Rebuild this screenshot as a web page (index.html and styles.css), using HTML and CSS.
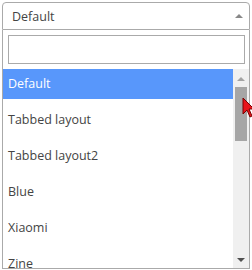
FILE: index.html
```html
<!DOCTYPE html>
<html>
    <head>
        <meta charset="UTF-8">
        <link rel="stylesheet" href="styles.css">
    </head>
    <body>
        <div class="select">
            <div class="selection">
                <span class="rendered">Default</span>
                <span class="arrow"></span>
            </div>
            <div class="dropdown">
                <div class="search"><input type="text" class="searchField"></div>
                <div class="results">
                    <ul class="options">
                        <li class="option highlighted">Default</li>
                        <li class="option">Tabbed layout</li>
                        <li class="option">Tabbed layout2</li>
                        <li class="option">Blue</li>
                        <li class="option">Xiaomi</li>
                        <li class="option">Zine</li>
                        <li class="option">Classic</li>
                    </ul>
                    <div class="scrollbar">
                        <span class="scrollUp"></span>
                        <div class="thumb"></div>
                        <span class="scrollDown"></span>
                    </div>
                </div>
            </div>
            <svg class="cursor" width="14" height="22" viewBox="0 0 14 22">
                <path d="M1 1 L1 17 L5 13 L8 20 L10 19 L7 12 L12 12 Z" fill="#e8151b" stroke="#7a0000" stroke-width="1"/>
            </svg>
        </div>
    </body>
</html>
```

FILE: styles.css
```css
html, body {
    margin: 0;
    padding: 0;
    background: #ffffff;
}

body {
    font-family: "Open Sans", "Noto Sans", sans-serif;
    font-size: 12.5px;
}

.select {
    position: relative;
    margin: 2px 0 0 2px;
    width: 248px;
}

.selection {
    height: 26px;
    border: 1px solid #aaaaaa;
    border-radius: 4px 4px 0 0;
    display: flex;
    align-items: center;
    justify-content: space-between;
    padding: 0 6px 0 9px;
}

.rendered {
    color: #444444;
}

.arrow {
    width: 0;
    height: 0;
    border-left: 4px solid transparent;
    border-right: 4px solid transparent;
    border-bottom: 4px solid #888888;
}

.dropdown {
    border: 1px solid #aaaaaa;
    border-top: none;
}

.search {
    padding: 5px 4px 5px 5px;
}

.searchField {
    display: block;
    box-sizing: border-box;
    width: 237px;
    height: 29px;
    margin: 0;
    border: 1px solid #aaaaaa;
    outline: none;
}

.results {
    display: flex;
    height: 199px;
    overflow: hidden;
}

.options {
    list-style: none;
    margin: 0;
    padding: 0;
    width: 230px;
    display: flex;
    flex-direction: column;
    gap: 6px;
}

.option {
    flex: none;
    height: 30px;
    line-height: 30px;
    padding-left: 5px;
    color: #444444;
}

.highlighted {
    background: #5897fb;
    color: #ffffff;
}

.scrollbar {
    flex: none;
    width: 16px;
    background: #f0f0f0;
    display: flex;
    flex-direction: column;
    align-items: center;
}

.scrollUp {
    margin-top: 8px;
    border-left: 4px solid transparent;
    border-right: 4px solid transparent;
    border-bottom: 4px solid #a3a3a3;
}

.thumb {
    margin-top: 6px;
    width: 12px;
    height: 54px;
    background: #a6a6a6;
}

.scrollDown {
    margin-top: auto;
    margin-bottom: 6px;
    border-left: 4px solid transparent;
    border-right: 4px solid transparent;
    border-top: 4px solid #505050;
}

.cursor {
    position: absolute;
    left: 240px;
    top: 95px;
}
```
